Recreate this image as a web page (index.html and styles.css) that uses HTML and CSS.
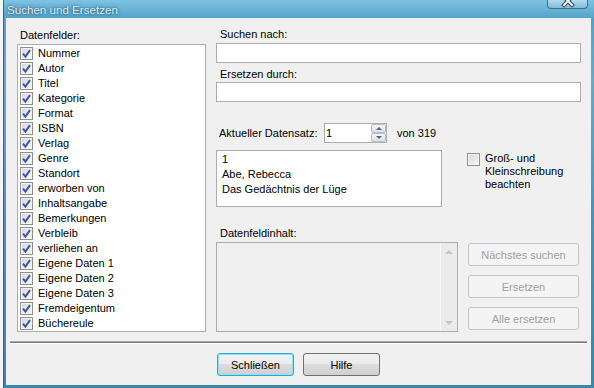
FILE: index.html
```html
<!DOCTYPE html>
<html lang="de">
<head>
  <meta charset="UTF-8" />
  <title>Suchen und Ersetzen</title>
  <link rel="stylesheet" href="styles.css">
</head>
<body>
  <!-- shared check mark -->
  <svg class="defs" width="0" height="0">
    <symbol id="tick" viewBox="0 0 11 11">
      <path d="M2 5.6 L4.4 8.6 L9 2.2" fill="none" stroke="#3f55a3" stroke-width="2" stroke-linejoin="miter"/>
    </symbol>
  </svg>

  <div class="desk">
    <div class="behind"></div>
    <div class="window">
      <div class="titlebar">
        <span class="title">Suchen und Ersetzen</span>
        <div class="close">
          <svg width="14" height="8" viewBox="0 0 14 8">
            <path d="M3 -3 L11 5 M11 -3 L3 5" stroke="#3b4650" stroke-width="4" stroke-linecap="square"/>
            <path d="M3 -3 L11 5 M11 -3 L3 5" stroke="#f2f4f6" stroke-width="2" stroke-linecap="square"/>
          </svg>
        </div>
      </div>

      <div class="client">
        <div class="main">
          <!-- Field list -->
          <div class="fields">
            <div class="lbl">Datenfelder:</div>
            <ul class="list">
              <li><span class="cb"><svg><use href="#tick"/></svg></span>Nummer</li>
              <li><span class="cb"><svg><use href="#tick"/></svg></span>Autor</li>
              <li><span class="cb"><svg><use href="#tick"/></svg></span>Titel</li>
              <li><span class="cb"><svg><use href="#tick"/></svg></span>Kategorie</li>
              <li><span class="cb"><svg><use href="#tick"/></svg></span>Format</li>
              <li><span class="cb"><svg><use href="#tick"/></svg></span>ISBN</li>
              <li><span class="cb"><svg><use href="#tick"/></svg></span>Verlag</li>
              <li><span class="cb"><svg><use href="#tick"/></svg></span>Genre</li>
              <li><span class="cb"><svg><use href="#tick"/></svg></span>Standort</li>
              <li><span class="cb"><svg><use href="#tick"/></svg></span>erworben von</li>
              <li><span class="cb"><svg><use href="#tick"/></svg></span>Inhaltsangabe</li>
              <li><span class="cb"><svg><use href="#tick"/></svg></span>Bemerkungen</li>
              <li><span class="cb"><svg><use href="#tick"/></svg></span>Verbleib</li>
              <li><span class="cb"><svg><use href="#tick"/></svg></span>verliehen an</li>
              <li><span class="cb"><svg><use href="#tick"/></svg></span>Eigene Daten 1</li>
              <li><span class="cb"><svg><use href="#tick"/></svg></span>Eigene Daten 2</li>
              <li><span class="cb"><svg><use href="#tick"/></svg></span>Eigene Daten 3</li>
              <li><span class="cb"><svg><use href="#tick"/></svg></span>Fremdeigentum</li>
              <li><span class="cb"><svg><use href="#tick"/></svg></span>Büchereule</li>
            </ul>
          </div>

          <!-- Search / replace -->
          <div class="right">
            <div class="lbl lbl-1">Suchen nach:</div>
            <div class="edit"></div>
            <div class="lbl lbl-2">Ersetzen durch:</div>
            <div class="edit"></div>

            <div class="rec-row">
              <span class="rec-lbl">Aktueller Datensatz:</span>
              <div class="spin">
                <span class="spin-val">1</span>
                <div class="spin-btns">
                  <span class="sb sb-up"></span>
                  <span class="sb sb-down"></span>
                </div>
              </div>
              <span class="of">von 319</span>
            </div>

            <div class="rec-wrap">
              <div class="record">1<br>Abe, Rebecca<br>Das Gedächtnis der Lüge</div>
              <div class="case">
                <span class="cb"></span>
                <span class="case-text">Groß- und Kleinschreibung beachten</span>
              </div>
            </div>

            <div class="lbl lbl-3">Datenfeldinhalt:</div>
            <div class="lower">
              <div class="content-box">
                <div class="vscroll">
                  <span class="arr arr-up"></span>
                  <span class="arr arr-down"></span>
                </div>
              </div>
              <div class="actions">
                <button class="btn-off" disabled>Nächstes suchen</button>
                <button class="btn-off" disabled>Ersetzen</button>
                <button class="btn-off" disabled>Alle ersetzen</button>
              </div>
            </div>
          </div>
        </div>

        <div class="sep"></div>

        <div class="footer">
          <button class="btn btn-default">Schließen</button>
          <button class="btn">Hilfe</button>
        </div>
      </div>
    </div>
  </div>
</body>
</html>
```

FILE: styles.css
```css
html, body {
  margin: 0;
  padding: 0;
}
body {
  width: 594px;
  height: 388px;
  overflow: hidden;
  background: #f6f6f6;
  color: #000;
  font-family: "Liberation Sans", Arial, sans-serif;
  font-size: 11px;
}
.defs {
  position: absolute;
}
.desk {
  display: flex;
  height: 388px;
}
.behind {
  width: 3px;
  background: #f4f4f4;
}
/* Window frame */
.window {
  flex: 1;
  display: flex;
  flex-direction: column;
  border-left: 1px solid #3b6579;
  padding: 0 3px 3px 2px;
  background: linear-gradient(to bottom, #7ec3e3 0, #55a3c9 18px, #6aa8c4 80px, #4a92b1 60%, #3a87a6 100%);
}
.titlebar {
  height: 18px;
  display: flex;
  align-items: flex-start;
}
.title {
  padding: 3px 0 0 1px;
  font-size: 11.6px;
  line-height: 13px;
  color: rgba(240, 246, 250, 0.9);
  text-shadow: 0 0 2px #2f6583, 0 0 4px rgba(40, 90, 120, 0.8);
}
.close {
  margin-left: auto;
  margin-right: 3px;
  width: 41px;
  height: 9px;
  box-sizing: border-box;
  border: 1px solid #41718b;
  border-top: none;
  border-radius: 0 0 4px 4px;
  background: linear-gradient(#b3dbee, #82bbd8);
  display: flex;
  justify-content: center;
}
.client {
  flex: 1;
  display: flex;
  flex-direction: column;
  background: #f0f0f0;
}
.main {
  display: flex;
  align-items: flex-start;
  gap: 10px;
  padding: 10px 0 0 11px;
}
.lbl {
  height: 13px;
  line-height: 13px;
  padding-left: 3px;
  margin-bottom: 2px;
  white-space: nowrap;
}
/* Field list */
.fields {
  width: 189px;
  padding-top: 1px;
}
.list {
  margin: 0;
  padding: 1px 0 0 2px;
  list-style: none;
  height: 288px;
  box-sizing: border-box;
  border: 1px solid #abadb3;
  background: #fff;
}
.list li {
  height: 15px;
  line-height: 15px;
  display: flex;
  align-items: center;
  white-space: nowrap;
}
.cb {
  flex: none;
  width: 13px;
  height: 13px;
  box-sizing: border-box;
  border: 1px solid #8f8f8f;
  background: linear-gradient(135deg, #d3d6da, #f8f8f8);
  box-shadow: inset 0 0 0 1px #f4f4f4;
  margin-right: 5px;
  display: flex;
}
.cb svg {
  width: 11px;
  height: 11px;
}
/* Right column */
.right {
  width: 365px;
  display: flex;
  flex-direction: column;
}
.right .lbl {
  padding-left: 4px;
}
.edit {
  height: 20px;
  box-sizing: border-box;
  border: 1px solid #abadb3;
  background: #fff;
}
.lbl-2 {
  margin-top: 5px;
  margin-bottom: 1px !important;
}
.rec-row {
  margin-top: 21px;
  height: 20px;
  display: flex;
  align-items: center;
}
.rec-lbl {
  width: 108px;
  padding-left: 3px;
  box-sizing: border-box;
  white-space: nowrap;
}
.spin {
  width: 63px;
  height: 20px;
  box-sizing: border-box;
  border: 1px solid #abadb3;
  background: #fff;
  display: flex;
  align-items: center;
  padding-left: 1px;
}
.spin-btns {
  margin-left: auto;
  width: 15px;
  height: 18px;
  display: flex;
  flex-direction: column;
}
.sb {
  flex: 1;
  box-sizing: border-box;
  border: 1px solid #b9bec4;
  border-radius: 2px;
  background: linear-gradient(#f5f5f5, #dde0e4);
  display: flex;
  align-items: center;
  justify-content: center;
}
.sb::after {
  content: "";
  border-left: 3px solid transparent;
  border-right: 3px solid transparent;
}
.sb-up::after {
  border-bottom: 3px solid #4c6390;
}
.sb-down::after {
  border-top: 3px solid #4c6390;
}
.of {
  margin-left: 10px;
  white-space: nowrap;
}
.rec-wrap {
  margin-top: 7px;
  display: flex;
  align-items: flex-start;
}
.record {
  width: 226px;
  height: 57px;
  box-sizing: border-box;
  border: 1px solid #abadb3;
  background: #fff;
  padding: 1px 0 0 5px;
  line-height: 15px;
}
.case {
  margin-left: 25px;
  padding-top: 2px;
  width: 100px;
  display: flex;
  align-items: flex-start;
  line-height: 13px;
}
.case .cb {
  margin-top: 1px;
}
.lbl-3 {
  margin-top: 20px;
}
.lower {
  display: flex;
  align-items: flex-start;
  gap: 10px;
}
.content-box {
  width: 242px;
  height: 90px;
  box-sizing: border-box;
  border: 1px solid #abadb3;
  background: #f0f0f0;
  display: flex;
  justify-content: flex-end;
}
.vscroll {
  width: 17px;
  box-sizing: border-box;
  border-left: 1px solid #f8f8f8;
  background: #ebebeb;
  display: flex;
  flex-direction: column;
  justify-content: space-between;
}
.arr {
  height: 17px;
  display: flex;
  align-items: center;
  justify-content: center;
}
.arr::after {
  content: "";
  border-left: 4px solid transparent;
  border-right: 4px solid transparent;
}
.arr-up::after {
  border-bottom: 4px solid #c6c6c6;
}
.arr-down::after {
  border-top: 4px solid #c6c6c6;
}
.actions {
  padding-top: 1px;
  display: flex;
  flex-direction: column;
  gap: 9px;
}
.btn-off {
  width: 111px;
  height: 23px;
  padding: 0;
  border: 1px solid #c3c6c9;
  border-radius: 3px;
  background: #f4f4f4;
  color: #a0a0a0;
  font: inherit;
}
/* Bottom */
.sep {
  margin: 9px 4px 0 4px;
  height: 1px;
  background: #7a7a7a;
  border-top: 1px solid #a8a8a8;
  border-bottom: 1px solid #fff;
}
.footer {
  margin-top: 9px;
  display: flex;
  justify-content: center;
  gap: 9px;
}
.btn {
  width: 77px;
  height: 23px;
  padding: 0;
  border: 1px solid #707070;
  border-radius: 3px;
  background: linear-gradient(#f2f2f2 0, #ebebeb 50%, #dddddd 50%, #cfcfcf 100%);
  color: #000;
  font: inherit;
}
.btn-default {
  border-color: #2aa6dc;
  box-shadow: inset 0 0 0 1px #8ee2f6;
}
```
